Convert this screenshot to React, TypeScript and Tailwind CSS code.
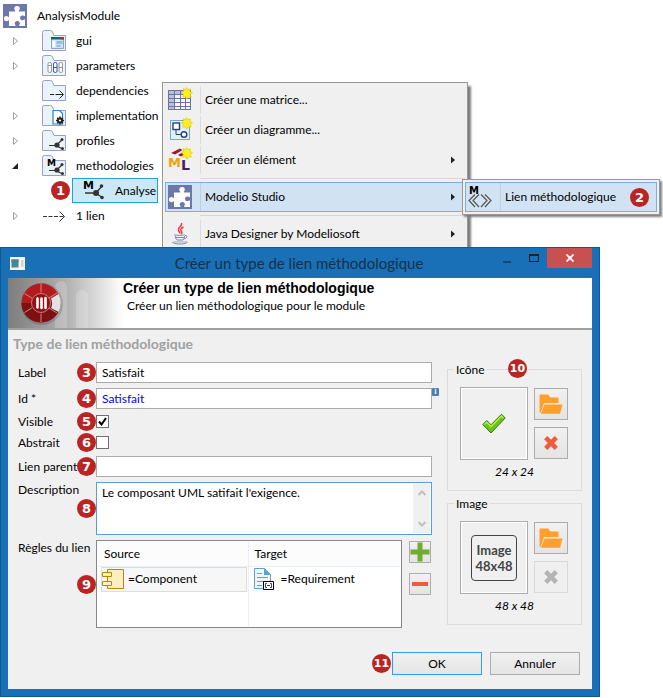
import clsx from "clsx";
import { useState, type ReactNode } from "react";

type TreeNode = {
  label: string;
  icon: ReactNode;
  state: "closed" | "open" | "leaf";
};

function Badge({ n, className }: { n: number; className?: string }) {
  return (
    <span
      className={clsx(
        "flex h-[19px] w-[19px] shrink-0 items-center justify-center rounded-full bg-[#b92525] font-['DejaVu_Sans',sans-serif] font-bold leading-none text-white",
        n > 9 ? "text-[11px]" : "text-[13px]",
        className,
      )}
    >
      {n}
    </span>
  );
}

function PuzzleIcon() {
  return (
    <svg width="24" height="24" viewBox="0 0 24 24" className="shrink-0">
      <rect width="24" height="24" fill="#6d78aa" />
      <path
        fill="#fff"
        d="M6 7.500h6.200c.5-.8-.9-1.500-.9-2.700A2.700 2.700 0 0 1 14 2.100a2.700 2.700 0 0 1 2.800 2.700c0 1.200-1.400 1.900-.9 2.700H22v4.600c-.8.500-1.300-.6-2.600-.6a2.400 2.400 0 0 0 0 4.800c1.300 0 1.800-1.100 2.600-.6V22h-5.800c-.5-.8.700-1.300.7-2.400a2.600 2.600 0 0 0-5.200 0c0 1.100 1.200 1.600.7 2.400H6v-5.600c-.8-.5-1.300.9-2.400.9a2.700 2.700 0 0 1 0-5.400c1.100 0 1.600 1.400 2.400.9z"
      />
    </svg>
  );
}

function FolderIcon({ children }: { children?: ReactNode }) {
  return (
    <svg width="24" height="24" viewBox="0 0 24 24" className="shrink-0">
      <path
        d="M.5 21.500V3.500q0-2 2-2h6q1.500 0 2 1.500l1.500 3.500h11.500v15z"
        fill="#eaf3f8"
        stroke="#94a0ca"
      />
      {children}
    </svg>
  );
}

function Network() {
  return (
    <>
      <path d="M7 16.500h7L20 11M14 16.500l6.500 3.500" stroke="#333" strokeWidth="1.200" fill="none" />
      <circle cx="15" cy="16" r="2.600" fill="#333" />
      <circle cx="20" cy="10.500" r="1.500" fill="#333" />
      <circle cx="20.500" cy="19.500" r="1.500" fill="#333" />
    </>
  );
}

function MethodIcon() {
  return (
    <svg width="24" height="24" viewBox="0 0 24 24" className="shrink-0">
      <text x="0" y="10" fontSize="11" fontWeight="bold" fontFamily="DejaVu Sans">
        M
      </text>
      <path d="M2 14h11l6-7M13 14l6 4.500" stroke="#333" strokeWidth="1.300" fill="none" />
      <circle cx="13" cy="14" r="3" fill="#333" />
      <circle cx="18.500" cy="7" r="1.800" fill="#333" />
      <circle cx="19" cy="18.500" r="1.800" fill="#333" />
    </svg>
  );
}

function Star() {
  return (
    <path
      d="M18.500-.5l1.300 2.300 2.600-1-.5 2.700 2.600 1.200-2.200 1.600.9 2.700-2.800-.2-1.500 2.400-1.500-2.400-2.800.4.800-2.800-2.300-1.700 2.500-1.200-.2-2.800 2.500.9z"
      fill="#fdf01c"
      stroke="#dcc400"
      strokeWidth=".6"
    />
  );
}

function MatrixIcon() {
  return (
    <svg width="24" height="24" viewBox="0 0 24 24" className="overflow-visible">
      <path d="M.5 2.500h23v20H.5z" fill="#f4f5fa" />
      <path d="M1 3h22v4H1zM1 3h5v19H1z" fill="#b9c0df" />
      <path
        d="M.5 2v20M6.500 2v20M12.500 2v20M17.500 2v20M22.500 2v20M0 2.500h23M0 6.500h23M0 10.500h23M0 14.500h23M0 18.500h23M0 21.500h23"
        stroke="#6a749c"
      />
      <Star />
    </svg>
  );
}

function DiagramIcon() {
  return (
    <svg width="24" height="24" viewBox="0 0 24 24" className="overflow-visible">
      <rect x="2.500" y="2.500" width="19" height="19" fill="#dff1f8" stroke="#6fa9cc" />
      <path d="M8 11v5.500h5" stroke="#2f3f70" fill="none" />
      <rect x="5" y="5" width="6.500" height="6.500" fill="#fff" stroke="#2f3f70" strokeWidth="1.400" />
      <circle cx="16" cy="16.500" r="2.800" fill="#fff" stroke="#2f3f70" strokeWidth="1.400" />
      <Star />
    </svg>
  );
}

function ElementIcon() {
  return (
    <svg width="24" height="24" viewBox="0 0 24 24" className="overflow-visible">
      <path d="M3 5l9-4.500 2.500 1.500L7 6.500zM10 7l7-4 2.500 1.500L13 8.500z" fill="#97192c" />
      <text x="0" y="19" fontSize="13" fontWeight="bold" fontFamily="DejaVu Sans" fill="#eda312">
        M
      </text>
      <text x="13" y="22" fontSize="14" fontWeight="bold" fontFamily="DejaVu Sans" fill="#4a1c58">
        L
      </text>
      <Star />
    </svg>
  );
}

function JavaIcon() {
  return (
    <svg width="24" height="24" viewBox="0 0 24 24" fill="none">
      <path
        d="M13.500 1c1.500 3-4.500 4.500-3 7.500.5 1 1.500 2 1.500 3M15.500 5c-3 1.500-3.500 3-2 4.500.8 1 .3 2-.5 2.500"
        stroke="#e5343a"
        strokeWidth="1.400"
      />
      <path
        d="M6.500 12.500c1 1.200 9 1.200 10 0M7 13.500c.5 2 1 4 2 4.500h6c1-.5 1.500-2.500 2-4.500M17 13.500c3-.5 2.500 3-1.500 3.500M8 15.500h8M5 19.500c-2 1.500 3 2.500 7 2.500s9-1 6.500-2.500"
        stroke="#6a7fa0"
        strokeWidth=".9"
      />
      <path d="M6 20h12" stroke="#9aa9c0" />
    </svg>
  );
}

function LinkTypeIcon() {
  return (
    <svg width="24" height="24" viewBox="0 0 24 24" fill="none">
      <text x="1" y="9" fontSize="10" fontWeight="bold" fontFamily="DejaVu Sans" fill="#000">
        M
      </text>
      <path
        d="M7 9.500l-6 6 6 6.500M11 9.500l-6 6 6 6.500M13 9.500l6 6-6 6.500M17 9.500l6 6-6 6.500"
        stroke="#555"
        strokeWidth="1.200"
      />
    </svg>
  );
}

const nodes: TreeNode[] = [
  {
    label: "gui",
    state: "closed",
    icon: (
      <FolderIcon>
        <path d="M9.500 9h12v10.500h-12z" fill="#cfe4f4" stroke="#7d95ad" strokeWidth=".8" />
        <path d="M9 8h13v2.500H9z" fill="#1d5d8c" />
        <path d="M19 8h2.500v2.500H19z" fill="#e02020" />
        <path d="M10.500 12h2.500v6h-2.500z" fill="#fff" />
        <path d="M14.500 12h6v3h-6z" fill="#8fbfe6" />
        <path d="M14.500 17h4" stroke="#8fbfe6" strokeWidth="2" />
      </FolderIcon>
    ),
  },
  {
    label: "parameters",
    state: "closed",
    icon: (
      <FolderIcon>
        <g fill="#fff" strokeWidth=".9">
          <rect x="6" y="8.500" width="3.500" height="10" rx="1.500" stroke="#8b8b8b" />
          <rect x="11.500" y="8.500" width="3.500" height="10" rx="1.500" stroke="#2644a0" />
          <rect x="17" y="8.500" width="3.500" height="10" rx="1.500" stroke="#8b8b8b" />
          <path d="M6 11.500h3.500M17 13.500h3.500" stroke="#8b8b8b" />
          <path d="M11.500 13.500H15" stroke="#2644a0" />
        </g>
      </FolderIcon>
    ),
  },
  {
    label: "dependencies",
    state: "leaf",
    icon: (
      <FolderIcon>
        <path d="M8 15.500h4M13.500 15.500h7.500M17.500 11.500l4 4-4 4" stroke="#222" fill="none" />
      </FolderIcon>
    ),
  },
  {
    label: "implementation",
    state: "closed",
    icon: (
      <FolderIcon>
        <path d="M11 6.500h6.500l3 3v10.500H11z" fill="#fff" stroke="#2585bd" strokeWidth="1.200" />
        <path
          d="M18 12.500v8M14 16.500h8M15.200 13.700l5.600 5.600M20.800 13.700l-5.600 5.600"
          stroke="#222"
          strokeWidth="1.500"
        />
        <circle cx="18" cy="16.500" r="2" fill="#fff" stroke="#222" strokeWidth="1.800" />
      </FolderIcon>
    ),
  },
  {
    label: "profiles",
    state: "closed",
    icon: (
      <FolderIcon>
        <Network />
      </FolderIcon>
    ),
  },
  {
    label: "methodologies",
    state: "open",
    icon: (
      <FolderIcon>
        <text x="5" y="12" fontSize="9" fontWeight="bold" fontFamily="DejaVu Sans">
          M
        </text>
        <Network />
      </FolderIcon>
    ),
  },
];

function Arrow({ state }: { state: TreeNode["state"] }) {
  return (
    <svg width="8" height="10" viewBox="0 0 8 10" className="ml-[12px] mr-[22px] shrink-0">
      {state === "closed" && <path d="M1.500 1.500v7l4-3.500z" fill="#fff" stroke="#a0a0a0" />}
      {state === "open" && <path d="M6 2v6H0z" fill="#222" />}
    </svg>
  );
}

function TreeRow({ label, icon, state }: TreeNode) {
  return (
    <li className="flex h-[25px] items-center">
      <Arrow state={state} />
      {icon}
      <span className="ml-[10px]">{label}</span>
    </li>
  );
}

function Tree() {
  return (
    <ul className="pt-[3px]">
      <li className="flex h-[25px] items-center pl-[3px]">
        <PuzzleIcon />
        <span className="ml-[10px]">AnalysisModule</span>
      </li>
      {nodes.map((node) => (
        <TreeRow key={node.label} {...node} />
      ))}
      <li className="flex h-[25px] items-center pl-[51px]">
        <Badge n={1} />
        <div className="ml-[2px] flex h-[25px] w-[86px] items-center border border-[#26a0da] bg-[#cbe8f6] pl-[10px]">
          <MethodIcon />
          <span className="ml-[8px]">Analyse</span>
        </div>
      </li>
      <TreeRow
        label="1 lien"
        state="closed"
        icon={
          <svg width="24" height="24" viewBox="0 0 24 24" fill="none" stroke="#333" className="shrink-0">
            <path d="M1 12.500h22" strokeDasharray="4 1.500" />
            <path d="M17.500 7.500l5 5-5 5" />
          </svg>
        }
      />
    </ul>
  );
}

function MenuItem({
  icon,
  label,
  submenu,
  active,
  children,
}: {
  icon: ReactNode;
  label: string;
  submenu?: boolean;
  active?: boolean;
  children?: ReactNode;
}) {
  return (
    <button
      type="button"
      role="menuitem"
      className={clsx(
        "flex h-[30px] w-full items-center border text-left",
        active ? "border-[#78aee5] bg-[#d1e2f2]" : "border-transparent",
      )}
    >
      <span className="ml-[2px] flex w-[24px] justify-center">{icon}</span>
      <span className={clsx("ml-[8px] h-full w-px", active ? "bg-[#bfd0e2]" : "bg-[#dcdcdc]")} />
      <span className="ml-[4px] flex-1">{label}</span>
      {submenu && (
        <svg width="5" height="8" viewBox="0 0 5 8" className="mr-[8px]">
          <path d="M0 .5v7L4 4z" fill="#222" />
        </svg>
      )}
      {children}
    </button>
  );
}

function Separator() {
  return (
    <div className="flex h-[7px] items-center pl-[35px]">
      <div className="h-px w-full bg-[#d7d7d7]" />
    </div>
  );
}

function Field({
  id,
  label,
  n,
  top,
  children,
}: {
  id: string;
  label: string;
  n: number;
  top?: boolean;
  children: ReactNode;
}) {
  return (
    <div className={clsx("flex", top ? "items-stretch" : "items-center")}>
      <div className="relative flex w-[78px] shrink-0 items-center">
        <label htmlFor={id} className={clsx("whitespace-nowrap", top && "self-start")}>
          {label}
        </label>
        <Badge n={n} className="absolute right-0" />
      </div>
      {children}
    </div>
  );
}

const toolButton =
  "flex items-center justify-center border border-[#acacac] bg-linear-to-b from-[#f1f1f1] to-[#e4e4e4]";

function PictureGroup({
  title,
  size,
  empty,
  children,
}: {
  title: string;
  size: string;
  empty?: boolean;
  children: ReactNode;
}) {
  return (
    <section className="relative h-[122px] border border-[#dcdcdc] px-[12px] pt-[17px]" aria-label={title}>
      <h3 className="absolute left-[6px] top-[-8px] bg-[#f0f0f0] px-[2px]">{title}</h3>
      <div className="flex gap-[6px]">
        <div className="flex h-[73px] w-[68px] items-center justify-center border border-[#acacac] bg-[#f0f0f0] outline outline-offset-[-2px] outline-white">
          {children}
        </div>
        <div className="flex flex-col gap-[7px] pt-px">
          <button type="button" aria-label="Ouvrir" className={clsx(toolButton, "h-[32px] w-[34px]")}>
            <svg width="24" height="20" viewBox="0 0 24 20" fill="#ffa02c">
              <path d="M.5 18V1q0-.5.500-.500h8l2.500 3h7.500q.5 0 .5.500V9H5L1.500 19z" />
              <path d="M5.500 10.500h18l-2.500 9.300H1.800z" />
            </svg>
          </button>
          <button
            type="button"
            aria-label="Supprimer"
            disabled={empty}
            className={clsx(
              "flex h-[32px] w-[34px] items-center justify-center border",
              empty
                ? "border-[#d9d9d9] bg-[#efefef] text-[#b4b4b4]"
                : "border-[#acacac] bg-linear-to-b from-[#f1f1f1] to-[#e4e4e4] text-[#f15a3c]",
            )}
          >
            <svg width="14" height="14" viewBox="0 0 14 14" stroke="currentColor" strokeWidth="4.500">
              <path d="M1.700 1.700l10.600 10.600M12.300 1.700L1.700 12.300" />
            </svg>
          </button>
        </div>
      </div>
      <p className="mt-[4px] text-center italic">{size}</p>
    </section>
  );
}

function DialogHeader() {
  return (
    <header className="flex h-[52px] border-b-2 border-[#a0a0a0] bg-white">
      <div className="w-[115px] shrink-0 bg-linear-to-r from-[#7d7d7d] via-[#b0b0b0] to-white">
        <svg width="115" height="50" viewBox="0 0 115 50">
          <path d="M47 50V9a6 6 0 0 1 12 0v41zM68 50V18a6 6 0 0 1 12 0v32z" fill="#fff" opacity=".2" />
          <circle cx="34" cy="26" r="21" fill="#000" opacity=".15" />
          <circle cx="33" cy="25" r="19.500" fill="#b31b1e" />
          <path d="M13.500 25a19.500 19.500 0 0 0 39 0z" fill="#7f1012" />
          <path d="M43 20.500l7.500-4.500a19.500 19.500 0 0 1 0 18l-7.500-4a11 11 0 0 0 0-9.500z" fill="#e2e2e2" />
          <path
            d="M33 5.500v9M33 35.500v9M16.500 15.500l8 5M16.500 34.500l8-5M41 20l8-5M41 30l8 5"
            stroke="#c99"
            strokeWidth=".9"
          />
          <circle cx="33" cy="25" r="9.500" fill="#8d1315" stroke="#c88" strokeWidth=".9" />
          <path d="M29.500 20.500v9M33.500 20.500v9.500M37.500 20v10" stroke="#fff" strokeWidth="2.600" strokeLinecap="round" />
        </svg>
      </div>
      <div>
        <h2 className="font-['Liberation_Sans',sans-serif] text-[14px] font-bold leading-[21px]">
          Créer un type de lien méthodologique
        </h2>
        <p className="pl-[4px] leading-[14px]">Créer un lien méthodologique pour le module</p>
      </div>
    </header>
  );
}

function RulesTable() {
  return (
    <div className="h-[88px] flex-1 border border-[#828790] bg-white p-px">
      <table className="h-full w-full table-fixed border-collapse text-left">
        <thead>
          <tr className="h-[24px] border-b border-[#e8eff8] bg-[#fcfcfc]">
            <th className="w-[150px] border-r border-[#e8eff8] pl-[6px] font-normal">Source</th>
            <th className="pl-[6px] font-normal">Target</th>
          </tr>
        </thead>
        <tbody>
          <tr className="h-[25px]">
            <td className="border-r border-[#e8eff8] pl-[3px] pr-px">
              <div className="flex h-[25px] items-center border border-[#dcdcdc] bg-[#f7f7f7]">
                <svg width="22" height="22" viewBox="0 0 22 22" fill="#fdefc0" stroke="#b8860b">
                  <path d="M5.500 1.500h16v19h-16z" />
                  <path d="M.5 4.500h9v4h-9zM.5 13.500h9v4h-9z" />
                </svg>
                <span className="ml-[4px]">=Component</span>
              </div>
            </td>
            <td className="pl-[4px]">
              <div className="flex items-center">
                <svg width="22" height="24" viewBox="0 0 22 24" fill="none">
                  <path d="M1.500 1.500h10l6 6v14h-16z" fill="#eef6fb" stroke="#5ba3d0" />
                  <path d="M11 1l7 7h-7z" fill="#5ba3d0" />
                  <path d="M4 6.500h5M4 10.500h11M4 14.500h8M4 18.500h5" stroke="#5ba3d0" />
                  <path d="M10.500 14.500h10v8h-10z" fill="#fff" stroke="#000" />
                  <path d="M14 16.500h-1.500v4H14M17 16.500h1.500v4H17M14 18.500h3" stroke="#1748c0" />
                </svg>
                <span className="ml-[6px]">=Requirement</span>
              </div>
            </td>
          </tr>
          <tr>
            <td className="border-r border-[#e8eff8]" />
            <td />
          </tr>
        </tbody>
      </table>
    </div>
  );
}

function CheckBox({ id, checked, onChange }: { id: string; checked: boolean; onChange: (value: boolean) => void }) {
  return (
    <span className="grid h-[21px] place-items-center">
      <input
        id={id}
        type="checkbox"
        checked={checked}
        onChange={(e) => onChange(e.target.checked)}
        className="col-start-1 row-start-1 h-[13px] w-[13px] appearance-none border border-[#707070] bg-white"
      />
      {checked && (
        <svg width="9" height="9" viewBox="0 0 9 9" className="pointer-events-none col-start-1 row-start-1">
          <path d="M1 4.500l2.500 3L8 1" fill="none" stroke="#000" strokeWidth="2" />
        </svg>
      )}
    </span>
  );
}

function LinkTypeDialog() {
  const [visible, setVisible] = useState(true);
  const [abstract, setAbstract] = useState(false);
  const input = "h-[21px] min-w-0 flex-1 border border-[#ababab] bg-white px-[5px] outline-none";

  return (
    <div role="dialog" className="relative w-full max-w-[600px] border border-[#135a94] bg-[#1a70b6] px-[7px] pb-[7px]">
      <div className="flex h-[30px] items-center">
        <svg width="15" height="13" viewBox="0 0 15 13" className="ml-[2px]">
          <path d="M0 0h15v13H0z" fill="#f4f4f4" />
          <path d="M1.500 2.500h7v8h-7z" fill="#3f8f86" />
          <path d="M1.500 2.500h7v3h-7z" fill="#4f7fa8" />
          <path d="M11 3h2.500v7H11z" fill="#cfd6da" />
        </svg>
        <h1 className="flex-1 pl-[80px] text-center text-[15px] text-[#16304a]">
          Créer un type de lien méthodologique
        </h1>
        <div className="flex self-start">
          <button type="button" aria-label="Réduire" className="flex h-[20px] w-[27px] items-center justify-center">
            <span className="mt-[7px] h-[2px] w-[8px] bg-[#1b4568]" />
          </button>
          <button type="button" aria-label="Agrandir" className="flex h-[20px] w-[27px] items-center justify-center">
            <span className="h-[8px] w-[10px] border border-t-2 border-[#222]" />
          </button>
          <button
            type="button"
            aria-label="Fermer"
            className="flex h-[20px] w-[45px] items-center justify-center bg-[#c75050]"
          >
            <svg width="8" height="8" viewBox="0 0 8 8" stroke="#fff" strokeWidth="1.800">
              <path d="M.5.500l7 7M7.500.500l-7 7" />
            </svg>
          </button>
        </div>
      </div>

      <div className="bg-[#f0f0f0]">
        <DialogHeader />
        <div className="flex gap-[7px] px-[10px]">
          <form className="min-w-0 flex-1">
            <h2 className="-ml-[5px] h-[32px] text-[14px] font-bold leading-[28px] text-[#a0a0a0]">
              Type de lien méthodologique
            </h2>
            <div className="flex flex-col gap-[5px] pr-[8px]">
              <Field id="label" label="Label" n={3}>
                <input id="label" className={input} defaultValue="Satisfait" />
              </Field>
              <div className="relative">
                <Field id="ident" label="Id *" n={4}>
                  <input id="ident" className={clsx(input, "text-[#0000ff]")} defaultValue="Satisfait" />
                </Field>
                <span className="absolute -right-[7px] top-0 flex h-[8px] w-[7px] items-center justify-center rounded-[1px] bg-[#4a7fb5] font-['DejaVu_Sans',sans-serif] text-[7px] font-bold leading-none text-white">
                  i
                </span>
              </div>
              <div className="-mb-[2px] -mt-[3px]">
                <Field id="visible" label="Visible" n={5}>
                  <CheckBox id="visible" checked={visible} onChange={setVisible} />
                </Field>
                <Field id="abstract" label="Abstrait" n={6}>
                  <CheckBox id="abstract" checked={abstract} onChange={setAbstract} />
                </Field>
              </div>
              <Field id="parent" label="Lien parent" n={7}>
                <input id="parent" className={input} />
              </Field>
              <Field id="description" label="Description" n={8} top>
                <div className="flex h-[53px] flex-1 border border-[#569de5] bg-white p-px">
                  <textarea
                    id="description"
                    className="min-w-0 flex-1 resize-none overflow-hidden px-[4px] py-px outline-none"
                    defaultValue="Le composant UML satifait l'exigence."
                    onFocus={(e) => e.target.setSelectionRange(e.target.value.length, e.target.value.length)}
                    autoFocus
                  />
                  <div className="flex w-[17px] flex-col items-center justify-between bg-[#f0f0f0] py-[6px]">
                    <svg width="8" height="6" viewBox="0 0 8 6" fill="none" stroke="#bfbfbf" strokeWidth="2">
                      <path d="M.5 5L4 1.500 7.500 5" />
                    </svg>
                    <svg width="8" height="6" viewBox="0 0 8 6" fill="none" stroke="#bfbfbf" strokeWidth="2">
                      <path d="M.5 1L4 4.500 7.500 1" />
                    </svg>
                  </div>
                </div>
              </Field>
              <Field id="rules" label="Règles du lien" n={9} top>
                <div id="rules" className="flex flex-1">
                  <RulesTable />
                  <div className="ml-[7px] mr-px flex flex-col gap-[10px] pt-px">
                    <button type="button" aria-label="Ajouter" className={clsx(toolButton, "h-[22px] w-[22px]")}>
                      <svg width="20" height="20" viewBox="0 0 20 20">
                        <path d="M7.500.500h5v7h7v5h-7v7h-5v-7h-7v-5h7z" fill="#72ac2e" />
                      </svg>
                    </button>
                    <button type="button" aria-label="Retirer" className={clsx(toolButton, "h-[22px] w-[22px]")}>
                      <span className="h-[4px] w-[16px] bg-[#f15a3c]" />
                    </button>
                  </div>
                </div>
              </Field>
            </div>
          </form>

          <div className="flex w-[135px] shrink-0 flex-col gap-[12px] pt-[39px]">
            <div className="relative">
              <PictureGroup title="Icône" size="24 x 24">
                <svg width="24" height="22" viewBox="0 0 24 22">
                  <path d="M.8 11.500l4-4L9 11.800 19.500 1.200l3.700 3.800L9 20z" fill="#6cc41a" stroke="#2d7a0d" />
                  <path
                    d="M2.500 11.500l2.300-2.300L9 13.500 19.500 3l1.800 2"
                    fill="none"
                    stroke="#b5f04a"
                    strokeWidth="1.400"
                  />
                </svg>
              </PictureGroup>
              <Badge n={10} className="absolute left-[61px] top-[-10px]" />
            </div>
            <PictureGroup title="Image" size="48 x 48" empty>
              <div className="flex h-[46px] w-[46px] flex-col items-center justify-center rounded-[4px] border border-[#444] text-[13px] font-bold leading-[16px] text-[#444]">
                <span>Image</span>
                <span>48x48</span>
              </div>
            </PictureGroup>
          </div>
        </div>

        <footer className="flex items-center justify-end pb-[14px] pr-[12px] pt-[24px]">
          <Badge n={11} className="mr-px" />
          <button
            type="button"
            className="h-[23px] w-[90px] border border-[#3399ff] bg-linear-to-b from-[#f0f0f0] to-[#e5e5e5]"
          >
            OK
          </button>
          <button
            type="button"
            className="ml-[8px] h-[23px] w-[90px] border border-[#acacac] bg-linear-to-b from-[#f0f0f0] to-[#e5e5e5]"
          >
            Annuler
          </button>
        </footer>
      </div>
    </div>
  );
}

export default function App() {
  return (
    <main className="min-h-screen bg-white font-['Lato','Open_Sans',sans-serif] text-[12px] leading-[16px] text-black">
      <div className="relative h-[247px] overflow-hidden">
        <Tree />
        <div
          role="menu"
          className="absolute left-[162px] top-[82px] w-[306px] border border-[#979797] bg-[#f0f0f0] p-[2px] shadow-[3px_4px_2px_#808080]"
        >
          <MenuItem icon={<MatrixIcon />} label="Créer une matrice..." />
          <MenuItem icon={<DiagramIcon />} label="Créer un diagramme..." />
          <MenuItem icon={<ElementIcon />} label="Créer un élément" submenu />
          <Separator />
          <MenuItem icon={<PuzzleIcon />} label="Modelio Studio" submenu active />
          <Separator />
          <MenuItem icon={<JavaIcon />} label="Java Designer by Modeliosoft" submenu />
        </div>
        <div
          role="menu"
          className="absolute left-[462px] top-[179px] w-[198px] border border-[#979797] bg-[#f0f0f0] p-[2px] shadow-[2px_2px_2px_#808080]"
        >
          <MenuItem icon={<LinkTypeIcon />} label="Lien méthodologique" active>
            <Badge n={2} className="mr-[7px]" />
          </MenuItem>
        </div>
      </div>
      <LinkTypeDialog />
    </main>
  );
}
